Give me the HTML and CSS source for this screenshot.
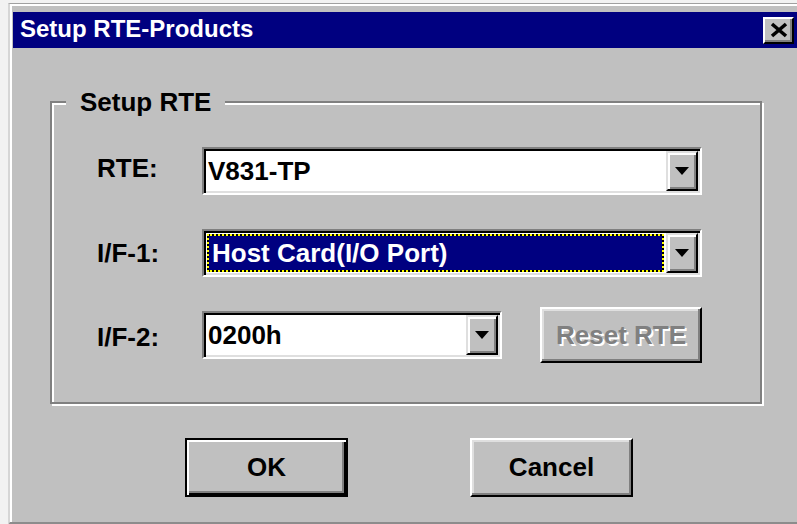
FILE: index.html
```html
<!DOCTYPE html>
<html lang="en">
<head>
<meta charset="utf-8">
<title>Setup RTE-Products</title>
<link rel="stylesheet" href="styles.css">
</head>
<body>
<div class="window">
  <div class="titlebar">
    <span class="title">Setup RTE-Products</span>
    <button class="close" aria-label="Close">
      <svg width="20" height="16" viewBox="0 0 20 16"><path d="M3 2 L17 14 M17 2 L3 14" stroke="#000" stroke-width="3.6" fill="none"/></svg>
    </button>
  </div>

  <div class="group">
    <span class="group-label">Setup RTE</span>

    <div class="row">
      <span class="label up">RTE:</span>
      <div class="combo wide">
        <div class="field"><span class="value">V831-TP</span></div>
        <span class="drop"><i class="arrow"></i></span>
      </div>
    </div>

    <div class="row">
      <span class="label">I/F-1:</span>
      <div class="combo wide">
        <div class="field focused"><span class="sel">Host Card(I/O Port)</span></div>
        <span class="drop"><i class="arrow"></i></span>
      </div>
    </div>

    <div class="row">
      <span class="label down">I/F-2:</span>
      <div class="combo narrow">
        <div class="field"><span class="value">0200h</span></div>
        <span class="drop"><i class="arrow"></i></span>
      </div>
      <button class="btn reset" disabled>Reset RTE</button>
    </div>
  </div>

  <div class="actions">
    <button class="btn main default">OK</button>
    <button class="btn main">Cancel</button>
  </div>
</div>
</body>
</html>
```
FILE: styles.css
```css
* {
  box-sizing: border-box;
}

html,
body {
  margin: 0;
}

body {
  width: 797px;
  height: 524px;
  overflow: hidden;
  background: #f2f2f2;
  font-family: "Liberation Sans", Arial, sans-serif;
  font-weight: bold;
  color: #000;
}

/* dialog frame */
.window {
  margin: 3px 0 0 8px;
  width: 789px;
  height: 522px;
  padding: 8px 0 0 3px;
  background: #c0c0c0;
  border-top: 1px solid #a0a0a0;
  border-left: 2px solid #d6d6d6;
  border-bottom: 3px solid #8c8c8c;
  box-shadow: inset 2px 2px 0 #fff;
}

.titlebar {
  height: 36px;
  padding: 0 3px 2px 7px;
  display: flex;
  align-items: center;
  justify-content: space-between;
  background: #000080;
  color: #fff;
  font-size: 24px;
}

.close {
  width: 31px;
  height: 27px;
  padding: 0;
  margin-top: 2px;
  display: flex;
  align-items: center;
  justify-content: center;
  background: #c0c0c0;
  border: 2px solid;
  border-color: #fff #000 #000 #fff;
  box-shadow: inset -2px -2px 0 #808080;
}

/* etched group box */
.group {
  position: relative;
  margin: 53px 0 0 37px;
  width: 712px;
  height: 303px;
  padding: 40px 0 0 45px;
  display: flex;
  flex-direction: column;
  gap: 26px;
  border: 2px solid #808080;
  box-shadow: inset 2px 2px 0 #fff, 2px 2px 0 #fff;
}

.group-label {
  position: absolute;
  top: -16px;
  left: 14px;
  padding: 0 14px;
  line-height: 30px;
  font-size: 26px;
  background: #c0c0c0;
}

.row {
  height: 56px;
  display: flex;
  align-items: center;
  font-size: 26px;
}

.label {
  width: 105px;
  flex: none;
}

.label.up {
  margin-top: -6px;
}

.label.down {
  margin-top: 4px;
}

/* sunken combo box */
.combo {
  height: 48px;
  padding: 2px;
  display: flex;
  border: 2px solid;
  border-color: #808080 #fff #fff #808080;
  box-shadow: inset 2px 2px 0 #000, inset -2px -2px 0 #dfdfdf;
}

.combo.wide {
  width: 500px;
}

.combo.narrow {
  width: 300px;
}

.field {
  flex: 1;
  display: flex;
  align-items: center;
  padding-left: 2px;
  background: #fff;
}

.field.focused {
  padding: 1px 2px 1px 1px;
  align-items: stretch;
}

.sel {
  flex: 1;
  display: flex;
  align-items: center;
  padding-left: 3px;
  color: #fff;
  border: 2px dotted #ffff00;
  background: linear-gradient(#000080, #000080) padding-box, #000;
}

.drop {
  width: 32px;
  flex: none;
  display: flex;
  align-items: center;
  justify-content: center;
  background: #c0c0c0;
  border: 2px solid;
  border-color: #dfdfdf #000 #000 #dfdfdf;
  box-shadow: inset 2px 2px 0 #fff, inset -2px -2px 0 #808080;
}

.arrow {
  width: 0;
  height: 0;
  border-left: 7px solid transparent;
  border-right: 7px solid transparent;
  border-top: 8px solid #000;
}

/* push buttons */
.btn {
  padding: 0;
  margin: 0;
  font: inherit;
  font-size: 26px;
  color: #000;
  background: #c0c0c0;
  border: 2px solid;
  border-color: #fff #000 #000 #fff;
  box-shadow: inset -2px -2px 0 #808080, inset 2px 2px 0 #dfdfdf;
}

.btn.reset {
  margin-left: 38px;
  width: 162px;
  height: 56px;
  color: #808080;
  text-shadow: 2px 2px 0 #fff;
}

.btn.main {
  width: 163px;
  height: 59px;
}

.btn.default {
  border-color: #000;
  box-shadow: inset 2px 2px 0 #fff, inset -2px -2px 0 #000, inset -4px -4px 0 #808080;
}

.actions {
  margin: 34px 0 0 37px;
  width: 712px;
  padding-left: 6px;
  display: flex;
  justify-content: center;
  gap: 122px;
}
```
